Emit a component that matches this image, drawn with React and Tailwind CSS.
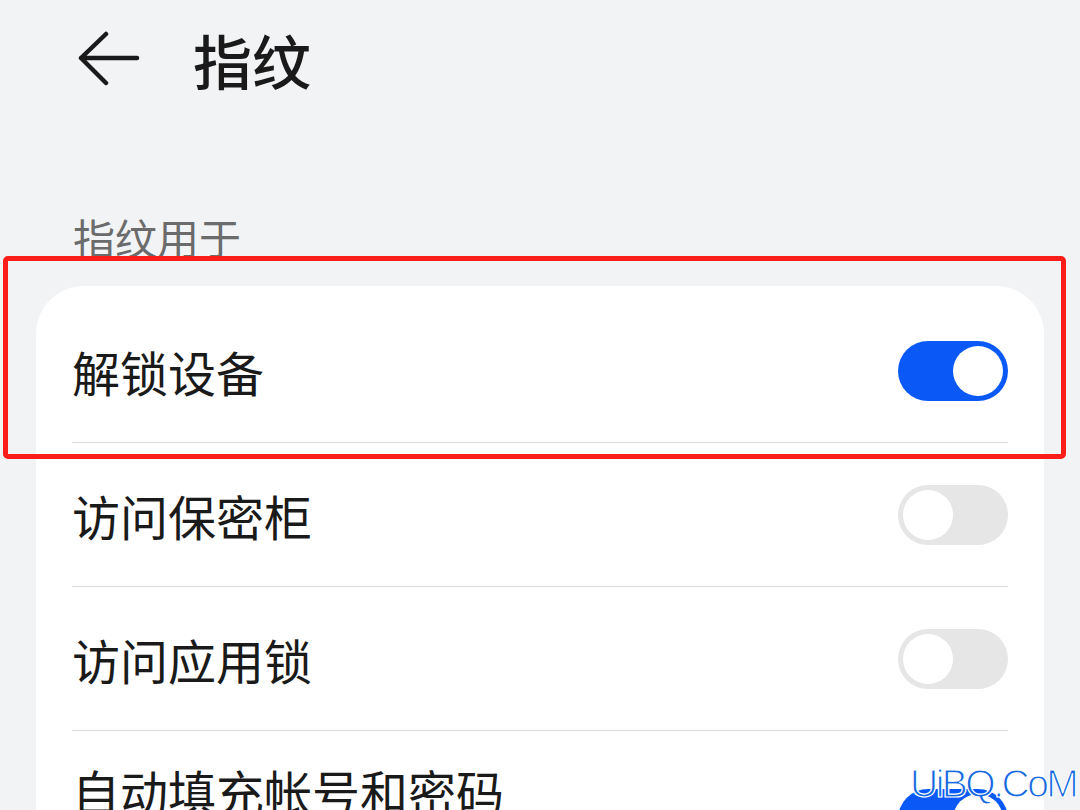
import React from "react";

const font = { fontFamily: '"Noto Sans CJK SC", "Noto Sans", sans-serif' };

const rows = [
  { id: 1, label: "解锁设备", on: true },
  { id: 2, label: "访问保密柜", on: false },
  { id: 3, label: "访问应用锁", on: false },
];

const Toggle = ({ on }) => (
  <div
    className={
      on
        ? "relative w-[110px] h-[60px] rounded-full bg-[#0a59f7] shrink-0"
        : "relative w-[110px] h-[60px] rounded-full bg-[#e6e6e6] shrink-0"
    }
  >
    <div
      className={
        on
          ? "absolute top-[5px] right-[5px] w-[50px] h-[50px] rounded-full bg-white"
          : "absolute top-[5px] left-[5px] w-[50px] h-[50px] rounded-full bg-white"
      }
    />
  </div>
);

export default function App() {
  return (
    <div
      className="relative w-[1080px] h-[810px] overflow-hidden bg-[#f1f3f5] text-[#1a1a1a]"
      style={font}
    >
      <div className="flex items-center h-[118px] pl-[78px]">
        <svg width="62" height="56" viewBox="0 0 62 56" fill="none">
          <path
            d="M28 3 L3 27 L28 52 M3 27 H59"
            stroke="#1a1a1a"
            strokeWidth="4.5"
            strokeLinecap="round"
            strokeLinejoin="round"
          />
        </svg>
        <h1 className="ml-[53px] text-[59px] leading-none font-medium">指纹</h1>
      </div>

      <div className="pl-[73px] pt-[98px] text-[42px] leading-none text-[#6b6b6b]">
        指纹用于
      </div>

      <div className="mx-[36px] mt-[28px] bg-white rounded-t-[48px] pt-[13px] px-[36px]">
        {rows.map((row) => (
          <div
            key={row.id}
            className="flex items-center justify-between h-[144px] border-b-[1.5px] border-[#dcdcdc]"
          >
            <span className="text-[48px] leading-none">{row.label}</span>
            <Toggle on={row.on} />
          </div>
        ))}
        <div className="flex items-center justify-between h-[176px]">
          <div className="self-start pt-[35px]">
            <span className="text-[48px] leading-none">自动填充帐号和密码</span>
          </div>
          <Toggle on />
        </div>
      </div>

      <div className="absolute left-[3px] top-[256px] w-[1063px] h-[203px] border-[5px] border-[#fb1d17] rounded-[5px]" />

      <div
        className="absolute left-[910px] top-[764px] text-[39px] leading-none tracking-[-2.5px] text-[#1667e0]"
        style={{
          fontFamily: '"Liberation Sans", Arial, sans-serif',
          WebkitTextStroke: "1.2px #ffffff",
        }}
      >
        UiBQ.CoM
      </div>
    </div>
  );
}
